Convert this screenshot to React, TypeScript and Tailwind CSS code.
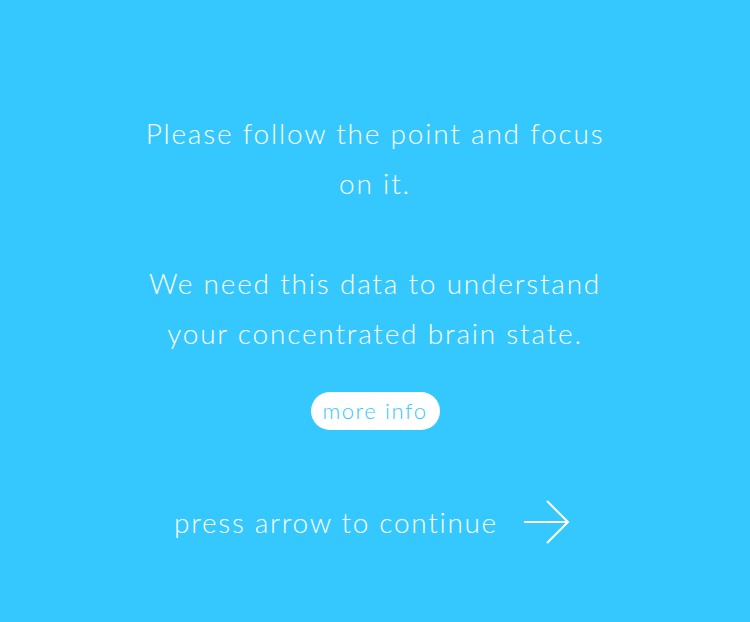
export default function App() {
  return (
    <div className="w-[750px] h-[622px] bg-[#34c8fe] flex flex-col items-center text-white font-['Lato','Noto_Sans',sans-serif] font-light">
      <div className="mt-[108px] w-[480px] text-center text-[28px] leading-[50px] tracking-[1.8px]">
        <p>Please follow the point and focus on it.</p>
        <p className="mt-[50px]">We need this data to understand your concentrated brain state.</p>
      </div>
      <button className="mt-[34px] h-[38px] w-[129px] rounded-full bg-white text-[#34c8fe] text-[22px] leading-none tracking-[1.6px]">
        more info
      </button>
      <div className="mt-[67px] mr-[6px] flex items-center gap-[26px]">
        <span className="text-[28px] leading-[50px] tracking-[1.7px]">press arrow to continue</span>
        <svg width="46" height="44" viewBox="0 0 46 44" fill="none" stroke="white" strokeWidth="2">
          <path d="M0 22 H44 M23 1 L44 22 L23 43" />
        </svg>
      </div>
    </div>
  );
}
